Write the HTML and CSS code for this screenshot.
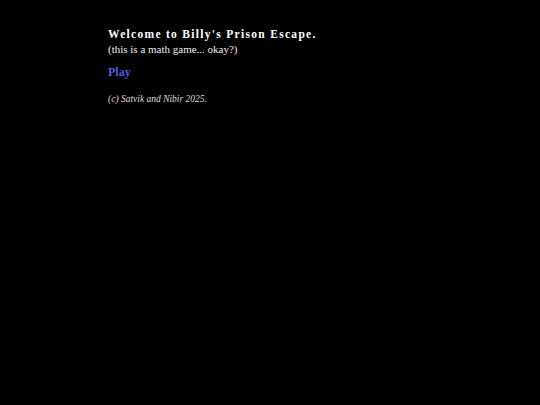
FILE: index.html
```html
<!DOCTYPE html>
<html>
<head>
<meta charset="utf-8">
<link rel="stylesheet" href="styles.css">
</head>
<body>
<main class="page">
  <h1 class="title">Welcome to Billy's Prison Escape.</h1>
  <p class="subtitle">(this is a math game... okay?)</p>
  <a class="play" href="#">Play</a>
  <p class="credit">(c) Satvik and Nibir 2025.</p>
</main>
</body>
</html>
```
FILE: styles.css
```css
html, body {
  margin: 0;
  padding: 0;
  background: #000;
  color: #fff;
  font-family: "Liberation Serif", "DejaVu Serif", serif;
}
.page {
  padding: 27px 0 0 108px;
  display: flex;
  flex-direction: column;
  align-items: flex-start;
}
.title {
  margin: 0;
  font-size: 11.5px;
  font-weight: bold;
  letter-spacing: 1.3px;
  line-height: 14px;
}
.subtitle {
  margin: 1px 0 0;
  font-size: 11px;
  line-height: 14px;
  color: #eee;
}
.play {
  margin-top: 9px;
  font-size: 12px;
  font-weight: bold;
  color: #4a5fd0;
  text-decoration: none;
  line-height: 14px;
}
.credit {
  margin: 14px 0 0;
  font-size: 9.5px;
  font-style: italic;
  line-height: 12px;
  color: #ddd;
}
```
